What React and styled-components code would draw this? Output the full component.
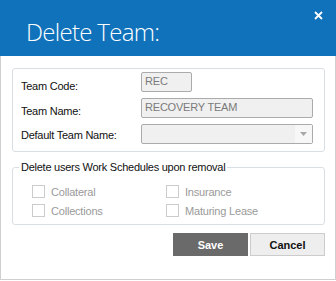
import React from 'react'
import styled, { createGlobalStyle } from 'styled-components'

const Global = createGlobalStyle`
  html, body { margin: 0; padding: 0; background: #fff; }
  body { font-family: "Liberation Sans", Arial, sans-serif; font-size: 11px; }
  * { box-sizing: border-box; }
`

const Window = styled.div`
  width: 336px;
  height: 280px;
  display: flex;
  flex-direction: column;
  background: #fff;
`

const Header = styled.div`
  position: relative;
  height: 56px;
  flex: none;
  background: #1072ba;
  color: #fff;
  padding: 17px 0 0 26px;
  font-family: "Open Sans", sans-serif;
  font-weight: 300;
  font-size: 24px;
  letter-spacing: -0.7px;
  line-height: 30px;
`

const Close = styled.button`
  position: absolute;
  top: 8px;
  right: 11px;
  width: 14px;
  height: 14px;
  padding: 0;
  border: 0;
  background: none;
  display: flex;
  align-items: center;
  justify-content: center;
`

const Body = styled.div`
  flex: 1;
  border: 1px solid #cfcfcf;
  border-top: 0;
  padding: 12px 10px 0 11px;
  display: flex;
  flex-direction: column;
`

const Group = styled.div`
  height: 84px;
  border: 1px solid #d8dfe4;
  border-radius: 3px;
  padding: 3px 11px 0 8px;
  display: grid;
  grid-template-columns: 120px 1fr;
  grid-template-rows: 20px 20px 20px;
  row-gap: 6px;
  align-items: center;
`

const Label = styled.label`
  color: #111;
  letter-spacing: -0.25px;
  margin-top: ${p => p.$drop || 0}px;
`

const Input = styled.div`
  height: 20px;
  width: ${p => p.$w || '100%'};
  border: 1px solid #ababab;
  border-radius: 2px;
  background: #f0f0f0;
  color: #7a7a7a;
  padding: 0 0 2px 3px;
  letter-spacing: -0.2px;
  display: flex;
  align-items: center;
`

const Select = styled(Input)`
  padding: 0;
  justify-content: flex-end;
  align-items: stretch;
`

const Arrow = styled.span`
  width: 17px;
  background: #f7f7f7;
  display: flex;
  align-items: center;
  justify-content: center;
`

const Fieldset = styled.fieldset`
  margin: 9px 0 0;
  padding: 0;
  border: 1px solid #d8dfe4;
  border-radius: 3px;
`

const Legend = styled.legend`
  margin-left: 6px;
  padding: 0 2px;
  line-height: 13px;
  color: #111;
  letter-spacing: -0.25px;
`

const Options = styled.div`
  display: grid;
  grid-template-columns: 134px 1fr;
  row-gap: 6px;
  padding: 11px 0 7px 19px;
`

const Check = styled.label`
  display: flex;
  align-items: center;
  gap: 6px;
  height: 13px;
  color: #9a9a9a;
  letter-spacing: -0.2px;
`

const Box = styled.span`
  width: 13px;
  height: 13px;
  border: 1px solid #cccccc;
  background: #fff;
`

const Actions = styled.div`
  display: flex;
  justify-content: flex-end;
  gap: 2px;
  margin-top: 8px;
`

const Button = styled.button`
  width: 75px;
  height: 23px;
  font-family: "Liberation Sans", Arial, sans-serif;
  font-size: 11px;
  font-weight: bold;
  border: 1px solid ${p => (p.$primary ? '#6a6a6a' : '#cccccc')};
  background: ${p => (p.$primary ? '#6a6a6a' : '#eeeeee')};
  color: ${p => (p.$primary ? '#fff' : '#111')};
  padding: 0;
`

const options = ['Collateral', 'Insurance', 'Collections', 'Maturing Lease']

export default function App() {
  return (
    <>
      <Global />
      <Window>
        <Header>
          Delete Team:
          <Close aria-label="Close">
            <svg width="9" height="9" viewBox="0 0 9 9">
              <path d="M1 1 L8 8 M8 1 L1 8" stroke="#fff" strokeWidth="1.8" />
            </svg>
          </Close>
        </Header>
        <Body>
          <Group>
            <Label $drop={8}>Team Code:</Label>
            <Input $w="51px">REC</Input>
            <Label $drop={6}>Team Name:</Label>
            <Input>RECOVERY TEAM</Input>
            <Label $drop={2}>Default Team Name:</Label>
            <Select>
              <Arrow>
                <svg width="7" height="4" viewBox="0 0 7 4">
                  <path d="M0 0 H7 L3.5 4 Z" fill="#a8a8a8" />
                </svg>
              </Arrow>
            </Select>
          </Group>
          <Fieldset>
            <Legend>Delete users Work Schedules upon removal</Legend>
            <Options>
              {options.map(o => (
                <Check key={o}>
                  <Box />
                  {o}
                </Check>
              ))}
            </Options>
          </Fieldset>
          <Actions>
            <Button $primary>Save</Button>
            <Button>Cancel</Button>
          </Actions>
        </Body>
      </Window>
    </>
  )
}
